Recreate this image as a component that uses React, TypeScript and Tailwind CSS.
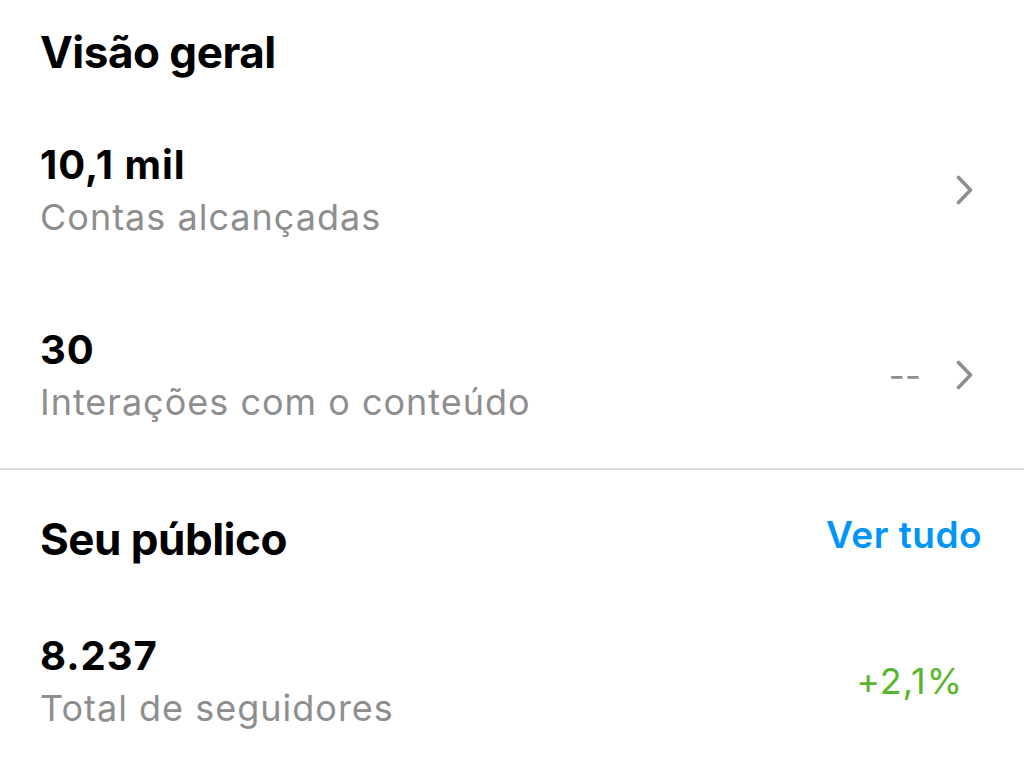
const Chevron = () => (
  <svg width="17" height="30" viewBox="0 0 17 30" fill="none" className="mr-[9px] shrink-0">
    <path d="M2.5 2.5 L14.5 15 L2.5 27.5" stroke="#8e8e8e" strokeWidth="3.6" strokeLinecap="round" strokeLinejoin="round" />
  </svg>
);

type StatProps = {
  value: string;
  label: string;
  className?: string;
  right?: React.ReactNode;
};

const StatRow = ({ value, label, className, right }: StatProps) => (
  <div className={"flex items-center justify-between " + (className ?? "")}>
    <div className="flex flex-col">
      <div className="text-[40px] leading-none font-bold text-black tracking-[1px]">{value}</div>
      <div className="mt-[14px] text-[36px] leading-none text-[#8e8e8e] tracking-[1px]">{label}</div>
    </div>
    {right}
  </div>
);

export default function App() {
  return (
    <div className="w-[1024px] h-[758px] overflow-hidden bg-white font-['Inter',sans-serif]">
      {/* Visão geral */}
      <section className="pl-[40px] pr-[42px] pb-[48px]">
        <h2 className="pt-[30px] text-[44px] leading-none font-bold text-black tracking-[-0.5px]">Visão geral</h2>

        <StatRow
          className="mt-[71px]"
          value="10,1 mil"
          label="Contas alcançadas"
          right={<Chevron />}
        />

        <StatRow
          className="mt-[95px]"
          value="30"
          label="Interações com o conteúdo"
          right={
            <div className="flex items-center gap-[35px]">
              <span className="text-[35px] leading-none text-[#8e8e8e]">--</span>
              <Chevron />
            </div>
          }
        />
      </section>

      <div className="h-[2px] bg-[#dbdbdb]" />

      {/* Seu público */}
      <section className="pl-[40px] pr-[42px]">
        <div className="mt-[46px] flex items-center justify-between">
          <h2 className="text-[44px] leading-none font-bold text-black tracking-[-0.5px]">Seu público</h2>
          <button className="text-[37px] leading-none font-semibold text-[#0095f6] tracking-[0.5px] mb-[8px]">Ver tudo</button>
        </div>

        <StatRow
          className="mt-[75px]"
          value="8.237"
          label="Total de seguidores"
          right={<span className="mr-[19px] text-[36px] leading-none text-[#58b62c] tracking-[1px]">+2,1%</span>}
        />
      </section>
    </div>
  );
}
